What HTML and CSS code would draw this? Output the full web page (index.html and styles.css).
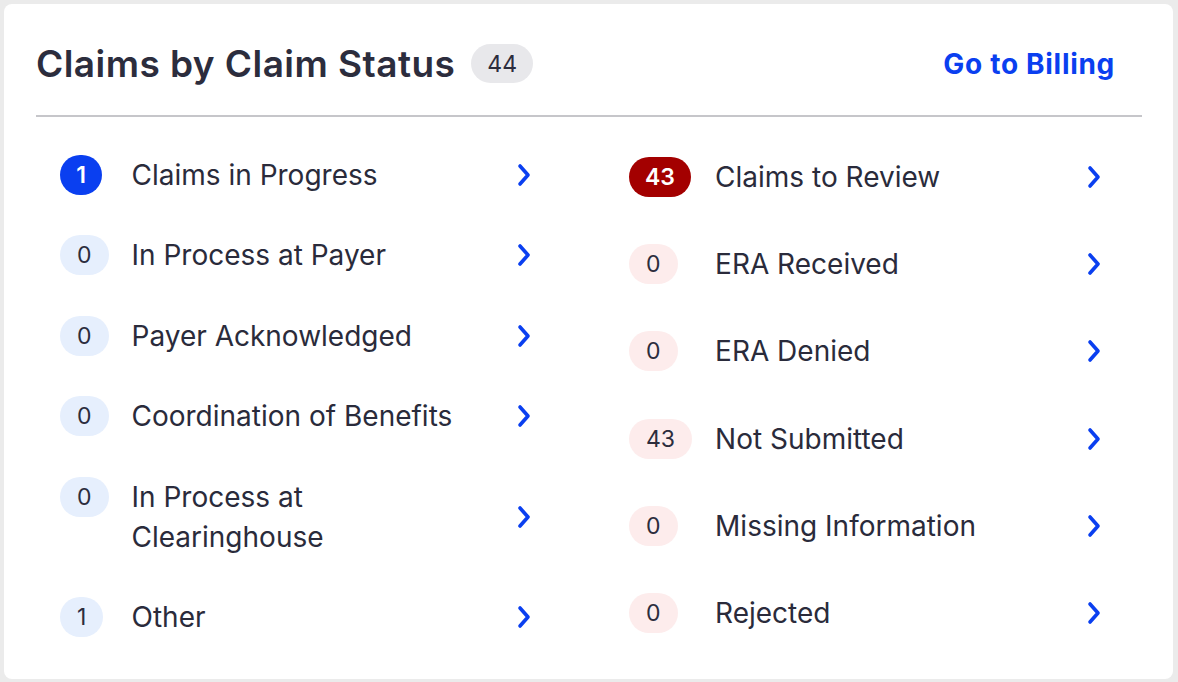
FILE: index.html
```html
<!DOCTYPE html>
<html lang="en">
<head>
<meta charset="utf-8">
<title>Claims by Claim Status</title>
<link rel="stylesheet" href="styles.css">
</head>
<body>
<section class="card">
  <header class="card-head">
    <div class="title-wrap">
      <h2 class="title">Claims by Claim Status</h2>
      <span class="count">44</span>
    </div>
    <a class="billing" href="#">Go to Billing</a>
  </header>
  <div class="lists">
    <ul class="col col-left">
      <li class="row"><span class="badge badge-solid-blue">1</span><span class="label">Claims in Progress</span><svg class="chev" viewBox="0 0 14 24"><path d="M3 3 L11 12 L3 21"/></svg></li>
      <li class="row"><span class="badge badge-blue">0</span><span class="label">In Process at Payer</span><svg class="chev" viewBox="0 0 14 24"><path d="M3 3 L11 12 L3 21"/></svg></li>
      <li class="row"><span class="badge badge-blue">0</span><span class="label">Payer Acknowledged</span><svg class="chev" viewBox="0 0 14 24"><path d="M3 3 L11 12 L3 21"/></svg></li>
      <li class="row"><span class="badge badge-blue">0</span><span class="label">Coordination of Benefits</span><svg class="chev" viewBox="0 0 14 24"><path d="M3 3 L11 12 L3 21"/></svg></li>
      <li class="row row-tall"><span class="badge badge-blue">0</span><span class="label">In Process at<br>Clearinghouse</span><svg class="chev" viewBox="0 0 14 24"><path d="M3 3 L11 12 L3 21"/></svg></li>
      <li class="row"><span class="badge badge-blue">1</span><span class="label">Other</span><svg class="chev" viewBox="0 0 14 24"><path d="M3 3 L11 12 L3 21"/></svg></li>
    </ul>
    <ul class="col col-right">
      <li class="row"><span class="badge badge-solid-red">43</span><span class="label">Claims to Review</span><svg class="chev" viewBox="0 0 14 24"><path d="M3 3 L11 12 L3 21"/></svg></li>
      <li class="row"><span class="badge badge-pink">0</span><span class="label">ERA Received</span><svg class="chev" viewBox="0 0 14 24"><path d="M3 3 L11 12 L3 21"/></svg></li>
      <li class="row"><span class="badge badge-pink">0</span><span class="label">ERA Denied</span><svg class="chev" viewBox="0 0 14 24"><path d="M3 3 L11 12 L3 21"/></svg></li>
      <li class="row"><span class="badge badge-pink">43</span><span class="label">Not Submitted</span><svg class="chev" viewBox="0 0 14 24"><path d="M3 3 L11 12 L3 21"/></svg></li>
      <li class="row"><span class="badge badge-pink">0</span><span class="label">Missing Information</span><svg class="chev" viewBox="0 0 14 24"><path d="M3 3 L11 12 L3 21"/></svg></li>
      <li class="row"><span class="badge badge-pink">0</span><span class="label">Rejected</span><svg class="chev" viewBox="0 0 14 24"><path d="M3 3 L11 12 L3 21"/></svg></li>
    </ul>
  </div>
</section>
</body>
</html>
```
FILE: styles.css
```css
html, body {
  margin: 0;
  padding: 0;
  background: #ebebeb;
}
body {
  padding: 4px 5px 3px 4px;
  font-family: Inter, "Noto Sans", sans-serif;
  color: #2a2b3b;
}
.card {
  background: #ffffff;
  border-radius: 8px;
  height: 675px;
  box-sizing: border-box;
  padding: 0 31px 0 32px;
}
.card-head {
  display: flex;
  align-items: center;
  justify-content: space-between;
  height: 113px;
  border-bottom: 2px solid #c6c6ca;
  padding-right: 27px;
  box-sizing: border-box;
}
.title-wrap {
  display: flex;
  align-items: center;
  gap: 16px;
  padding-top: 8px;
}
.title {
  margin: 0;
  font-size: 37px;
  font-weight: 600;
  letter-spacing: 0.45px;
  color: #2c2d3d;
}
.count {
  display: inline-flex;
  align-items: center;
  justify-content: center;
  height: 39px;
  padding: 0 16px;
  border-radius: 20px;
  background: #e8e8eb;
  font-size: 23px;
  color: #2c2d3d;
}
.billing {
  font-size: 28px;
  font-weight: 700;
  color: #0a3ff0;
  text-decoration: none;
  padding-top: 8px;
  letter-spacing: 0.7px;
}
.lists {
  display: grid;
  grid-template-columns: 471px 472px;
  column-gap: 98px;
  padding: 38px 0 0 24px;
}
.col {
  list-style: none;
  margin: 0;
  padding: 0;
  display: grid;
  grid-template-columns: auto 1fr auto;
  column-gap: 23px;
  align-content: space-between;
  height: 482px;
}
.col-right {
  column-gap: 23px;
  padding-top: 2px;
  height: 476px;
}
.row {
  display: contents;
}
.badge {
  grid-column: 1;
  justify-self: start;
  display: inline-flex;
  align-items: center;
  justify-content: center;
  height: 40px;
  min-width: 42px;
  box-sizing: border-box;
  padding: 0 17px;
  border-radius: 20px;
  font-size: 23px;
  color: #2c2d3d;
  align-self: start;
}
.badge-solid-blue {
  background: #0a3ff0;
  color: #ffffff;
  font-weight: 600;
  padding: 0 14px;
}
.badge-blue {
  background: #e6effd;
}
.badge-solid-red {
  background: #a30000;
  color: #ffffff;
  font-weight: 600;
  padding: 0 16px;
}
.badge-pink {
  background: #fdecec;
}
.label {
  grid-column: 2;
  font-size: 28px;
  line-height: 40px;
  color: #2a2b3b;
}
.chev {
  grid-column: 3;
  align-self: center;
  width: 14px;
  height: 24px;
  fill: none;
  stroke: #0a3ff0;
  stroke-width: 3.6;
  stroke-linecap: round;
  stroke-linejoin: round;
}
```
